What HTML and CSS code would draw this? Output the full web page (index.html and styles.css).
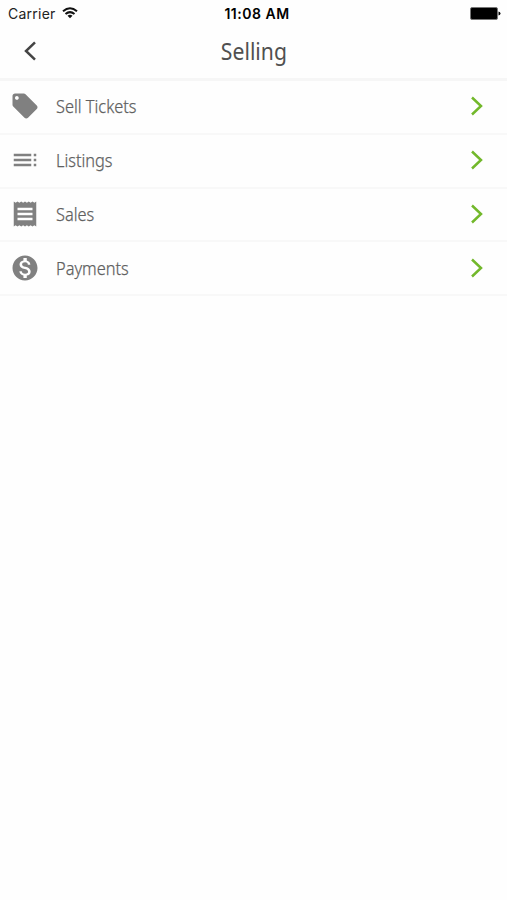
FILE: index.html
```
<!DOCTYPE html>
<html lang="en">
<head>
<meta charset="utf-8">
<title>Selling</title>
<link rel="stylesheet" href="styles.css">
</head>
<body>
<div class="status">
  <div class="carrier"><span>Carrier</span>
    <svg class="wifi" width="16" height="12" viewBox="0 0 16 12" fill="none" stroke="#111" stroke-width="2"><path d="M1 4.200Q8-1.800 15 4.200M3.500 7Q8 3.200 12.500 7"/><path d="M5.500 8.700Q8 7 10.500 8.700L8 11.300Z" fill="#111" stroke="none"/></svg>
  </div>
  <time class="clock">11:08 AM</time>
  <svg class="battery" width="31" height="13" viewBox="0 0 31 13"><rect x=".5" y=".5" width="27" height="12" rx="1.500" fill="#000" stroke="#777"/><path d="M28.500 4.500Q30.500 5 30.500 6.500T28.500 8.500Z"/></svg>
</div>
<header class="nav">
  <svg class="back" width="14" height="22" viewBox="0 0 14 22"><path d="M12 2.300 3 11l9 8.700" fill="none" stroke="#444" stroke-width="2.500"/></svg>
  <h1><span>Selling</span></h1>
</header>
<ul class="menu">
  <li><svg class="icon" viewBox="0 0 24 24"><path d="M21.410 11.580l-9-9C12.050 2.220 11.550 2 11 2H4c-1.100 0-2 .9-2 2v7c0 .55.22 1.050.59 1.420l9 9c.36.36.86.58 1.410.58.55 0 1.050-.22 1.410-.59l7-7c.37-.36.59-.86.59-1.410 0-.55-.23-1.060-.59-1.420zM5.500 7C4.670 7 4 6.330 4 5.500S4.670 4 5.500 4 7 4.670 7 5.500 6.330 7 5.500 7z"/></svg><span class="label">Sell Tickets</span><svg class="chevron" viewBox="0 0 14 22"><path d="M2 2.500 11 11l-9 8.500"/></svg></li>
  <li><svg class="icon" viewBox="0 0 24 24"><path d="M3 9h14V7H3v2zm0 4h14v-2H3v2zm0 4h14v-2H3v2zm16 0h2v-2h-2v2zm0-10v2h2V7h-2zm0 6h2v-2h-2v2z"/></svg><span class="label">Listings</span><svg class="chevron" viewBox="0 0 14 22"><path d="M2 2.500 11 11l-9 8.500"/></svg></li>
  <li><svg class="icon" viewBox="0 0 24 24"><path d="M18 17H6v-2h12v2zm0-4H6v-2h12v2zm0-4H6V7h12v2zM3 22l1.500-1L6 22l1.500-1L9 22l1.500-1L12 22l1.500-1L15 22l1.500-1L18 22l1.500-1L21 22V2l-1.500 1L18 2l-1.500 1L15 2l-1.500 1L12 2l-1.500 1L9 2 7.500 3 6 2 4.500 3 3 2v20z"/></svg><span class="label">Sales</span><svg class="chevron" viewBox="0 0 14 22"><path d="M2 2.500 11 11l-9 8.500"/></svg></li>
  <li><svg class="icon" viewBox="0 0 24 24"><path d="M12 2C6.480 2 2 6.480 2 12s4.480 10 10 10 10-4.480 10-10S17.520 2 12 2zm1.410 16.090V20h-2.670v-1.930c-1.710-.36-3.160-1.460-3.270-3.400h1.960c.1 1.050.82 1.870 2.650 1.870 1.960 0 2.400-.98 2.400-1.590 0-.83-.44-1.610-2.670-2.140-2.480-.6-4.180-1.620-4.180-3.670 0-1.720 1.390-2.840 3.110-3.210V4h2.670v1.950c1.860.45 2.790 1.860 2.850 3.390H14.300c-.05-1.110-.64-1.870-2.220-1.870-1.500 0-2.400.68-2.400 1.640 0 .84.65 1.390 2.670 1.910s4.180 1.390 4.180 3.910c-.01 1.830-1.380 2.830-3.120 3.160z"/></svg><span class="label">Payments</span><svg class="chevron" viewBox="0 0 14 22"><path d="M2 2.500 11 11l-9 8.500"/></svg></li>
</ul>
</body>
</html>
```
FILE: styles.css
```
* { box-sizing: border-box; }
body {
  margin: 0;
  min-height: 100vh;
  background: #fefefe;
  color: #606060;
  font-family: "Noto Sans", sans-serif;
}
.status {
  display: grid;
  grid-template-columns: 1fr auto 1fr;
  align-items: center;
  height: 27px;
  padding: 0 6px 0 8px;
  font-family: Inter, sans-serif;
  font-size: 14px;
  color: #222;
}
.carrier { display: flex; align-items: center; gap: 6px; letter-spacing: .25px; }
.wifi { margin-top: -2px; }
.clock { font-weight: 600; color: #000; letter-spacing: .5px; margin-left: 5px; }
.battery { justify-self: end; }
.nav {
  display: grid;
  grid-template-columns: 60px 1fr 60px;
  align-items: center;
  height: 54px;
  padding-bottom: 4px;
  border-bottom: 3px solid #f6f6f6;
}
.back { margin: 1px 0 0 23px; }
.nav h1 {
  margin: 0;
  text-align: center;
  font-size: 23px;
  font-weight: 400;
  line-height: 32px;
  color: #505050;
}
.nav span { display: inline-block; transform: scaleX(.92); }
.menu { margin: 0; padding: 0; list-style: none; }
.menu li {
  display: flex;
  align-items: center;
  height: 53.75px;
  padding: 0 23px 1px 10px;
  border-bottom: 2px solid #f8f8f8;
}
.icon { width: 30px; height: 30px; fill: #808080; }
.label {
  flex: 1;
  margin-left: 16px;
  font-size: 17.5px;
  font-weight: 300;
  line-height: 24px;
  -webkit-text-stroke: .25px #606060;
  transform: scaleX(.935);
  transform-origin: left;
}
.chevron {
  width: 14px;
  height: 22px;
  fill: none;
  stroke: #72b82b;
  stroke-width: 2.5;
}
```
